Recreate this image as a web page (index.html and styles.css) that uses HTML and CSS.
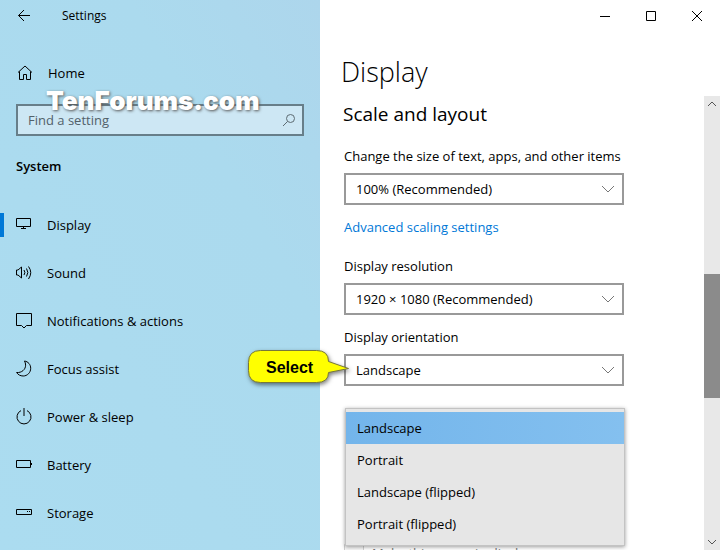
FILE: index.html
```html
<!DOCTYPE html>
<html lang="en">

<head>
    <meta charset="utf-8">
    <title>Settings</title>
    <link rel="stylesheet" href="styles.css">
</head>

<body>

    <aside class="sidebar">
        <div class="titlebar">
            <button class="back-button" title="Back">
                <svg width="14" height="14" viewBox="0 0 14 14">
                    <path d="M13 6.5H1.5M7 1L1.5 6.5L7 12" />
                </svg>
            </button>
            <span class="app-name">Settings</span>
        </div>

        <a href="#" class="nav-link home">
            <svg width="18" height="18" viewBox="0 0 18 18">
                <path d="M2 8.5L9 2L16 8.5M3.5 7.5V15.5H7.5V10.5H10.5V15.5H14.5V7.5" />
            </svg>
            Home
        </a>

        <div class="search">
            <input type="text" class="search-input" placeholder="Find a setting" aria-label="Find a setting">
            <svg width="14" height="14" viewBox="0 0 14 14">
                <circle cx="8.5" cy="5.5" r="4" />
                <path d="M5.5 8.5L1 13" />
            </svg>
            <div class="watermark">TenForums.com</div>
        </div>

        <h2 class="group-title">System</h2>

        <nav>
            <a href="#" class="nav-link active">
                <svg width="18" height="18" viewBox="0 0 18 18">
                    <path d="M1.5 2.5H15.5V10.5H1.5ZM8.5 10.5V12.5M6 12.5H11" />
                </svg>
                Display
            </a>
            <a href="#" class="nav-link">
                <svg width="18" height="18" viewBox="0 0 18 18">
                    <path d="M1.5 6V11H3L6.5 14V3L3 6Z" />
                    <path d="M9 6Q10.8 8.5 9 11M11.5 4.5Q14.2 8.5 11.5 12.5M13.5 2.5Q18 8.5 13.5 15" />
                </svg>
                Sound
            </a>
            <a href="#" class="nav-link">
                <svg width="18" height="18" viewBox="0 0 18 18">
                    <path d="M1.5 1.5H16.5V13.5H11.5L9 16L6.5 13.5H1.5Z" />
                </svg>
                Notifications &amp; actions
            </a>
            <a href="#" class="nav-link">
                <svg width="18" height="18" viewBox="0 0 18 18">
                    <path d="M9.5 1C13.2 1.6 15.7 4.6 15.7 8.3C15.7 12.6 12.3 16 8.2 16C5.3 16 2.9 14.6 1.6 12.5C6.7 13 10.6 9.5 10.6 5.2C10.6 3.6 10.2 2.2 9.5 1Z" />
                </svg>
                Focus assist
            </a>
            <a href="#" class="nav-link">
                <svg width="18" height="18" viewBox="0 0 18 18">
                    <path d="M6 2.6A7 7 0 1 0 12 2.6M9 0V8" />
                </svg>
                Power &amp; sleep
            </a>
            <a href="#" class="nav-link">
                <svg width="18" height="18" viewBox="0 0 18 18">
                    <path d="M1.5 4.5H15.5V11.5H1.5ZM16.5 7V9" />
                </svg>
                Battery
            </a>
            <a href="#" class="nav-link">
                <svg width="18" height="18" viewBox="0 0 18 18">
                    <path d="M1.5 5.5H16.5V10.5H1.5ZM12 7.5H13M14 7.5H15" />
                </svg>
                Storage
            </a>
        </nav>
    </aside>

    <main class="main">
        <div class="window-buttons">
            <button class="window-button" title="Minimize">
                <svg width="12" height="12" viewBox="0 0 12 12"><path d="M1 6.5H11" /></svg>
            </button>
            <button class="window-button" title="Maximize">
                <svg width="12" height="12" viewBox="0 0 12 12"><path d="M1.5 1.5H10.5V10.5H1.5Z" /></svg>
            </button>
            <button class="window-button" title="Close">
                <svg width="12" height="12" viewBox="0 0 12 12"><path d="M1 1L11 11M11 1L1 11" /></svg>
            </button>
        </div>

        <h1 class="page-title">Display</h1>

        <div class="scroll-area">
            <div class="content">
                <h2 class="section-title">Scale and layout</h2>

                <div class="field">
                    <label for="scale">Change the size of text, apps, and other items</label>
                    <div class="select-box">
                        <select id="scale">
                            <option>100% (Recommended)</option>
                        </select>
                        <svg width="12" height="8" viewBox="0 0 12 8"><path d="M0 1L6 7L12 1" /></svg>
                    </div>
                </div>

                <a href="#" class="text-link">Advanced scaling settings</a>

                <div class="field">
                    <label for="resolution">Display resolution</label>
                    <div class="select-box">
                        <select id="resolution">
                            <option>1920 × 1080 (Recommended)</option>
                        </select>
                        <svg width="12" height="8" viewBox="0 0 12 8"><path d="M0 1L6 7L12 1" /></svg>
                    </div>
                </div>

                <div class="field">
                    <label for="orientation">Display orientation</label>
                    <div class="select-box">
                        <select id="orientation">
                            <option>Landscape</option>
                            <option>Portrait</option>
                            <option>Landscape (flipped)</option>
                            <option>Portrait (flipped)</option>
                        </select>
                        <svg width="12" height="8" viewBox="0 0 12 8"><path d="M0 1L6 7L12 1" /></svg>

                        <!-- Opened list of the orientation box -->
                        <div class="menu" role="listbox" aria-label="Display orientation">
                            <button class="menu-item selected" role="option" aria-selected="true">Landscape</button>
                            <button class="menu-item" role="option">Portrait</button>
                            <button class="menu-item" role="option">Landscape (flipped)</button>
                            <button class="menu-item" role="option">Portrait (flipped)</button>
                        </div>

                        <div class="callout">
                            <svg width="112" height="46" viewBox="0 0 112 46">
                                <path d="M16.5 4.5H72.5Q84.5 4.5 84.5 15.5L104.5 22.5L84.5 26.5Q84.5 36.5 72.5 36.5H16.5Q4.5 36.5 4.5 24.5V16.5Q4.5 4.5 16.5 4.5Z" />
                            </svg>
                            <span>Select</span>
                        </div>
                    </div>
                </div>

                <label class="check">
                    <input type="checkbox" disabled>
                    Make this my main display
                </label>
            </div>

            <div class="scrollbar">
                <svg width="10" height="6" viewBox="0 0 10 6"><path d="M1 5L5 1L9 5" /></svg>
                <div class="track">
                    <div class="thumb"></div>
                </div>
                <svg width="10" height="6" viewBox="0 0 10 6"><path d="M1 1L5 5L9 1" /></svg>
            </div>
        </div>
    </main>

</body>

</html>
```
FILE: styles.css
```css
* {
    box-sizing: border-box;
}

body {
    display: flex;
    height: 100vh;
    margin: 0;
    overflow: hidden;
    background-color: #fff;
    color: #000;
    font-family: "Open Sans", "Noto Sans", sans-serif;
    font-size: 13px;
    line-height: 20px;
}

svg {
    flex: none;
    fill: none;
    stroke: #000;
}

button,
input,
select {
    font: inherit;
    color: inherit;
}

button {
    padding: 0;
    border: none;
    background: none;
}

h1,
h2 {
    margin: 0;
}

/* Left pane */
.sidebar {
    flex: 0 0 320px;
    overflow: hidden;
    background: linear-gradient(to bottom left, #add6ec, #abdaee 30%, #abdcf0);
}

.titlebar {
    display: flex;
    align-items: center;
    height: 32px;
}

.back-button {
    display: flex;
    justify-content: center;
    width: 48px;
}

.app-name {
    margin-left: 14px;
    font-size: 12px;
}

.nav-link {
    display: flex;
    align-items: center;
    gap: 14px;
    height: 48px;
    padding-left: 15px;
    color: #000;
    text-decoration: none;
}

.home {
    margin-top: 17px;
    padding-left: 16px;
}

.active {
    background: linear-gradient(#0078d7, #0078d7) left center / 4px 24px no-repeat;
}

.search {
    position: relative;
    display: flex;
    align-items: center;
    height: 32px;
    margin: 7px 16px 0;
    padding: 0 6px 0 10px;
    border: 2px solid #677e89;
    background-color: #cde7f4;
}

.search svg {
    stroke: #5d6b72;
}

.search-input {
    flex: 1;
    min-width: 0;
    padding: 0;
    border: none;
    outline: none;
    background: none;
}

.search-input::placeholder {
    color: #52616a;
    opacity: 1;
}

.watermark {
    position: absolute;
    left: 28px;
    top: -21px;
    color: #fff;
    font-family: Inter, sans-serif;
    font-size: 26px;
    font-weight: 900;
    line-height: 32px;
    text-shadow: 1px 1px 3px #555;
}

.group-title {
    margin: 20px 16px 25px;
    font-size: 13px;
    font-weight: 600;
}

/* Right pane */
.main {
    flex: 1;
    display: flex;
    flex-direction: column;
    min-width: 0;
}

.window-buttons {
    display: flex;
    justify-content: flex-end;
    height: 32px;
}

.window-button {
    display: flex;
    align-items: center;
    justify-content: center;
    width: 46px;
}

.page-title {
    padding: 20px 21px 4px;
    font-size: 27px;
    font-weight: 300;
    line-height: 40px;
}

.scroll-area {
    flex: 1;
    display: flex;
    min-height: 0;
}

.content {
    flex: 1;
    padding: 4px 24px 0;
}

.section-title {
    margin: 0 0 18px -1px;
    font-size: 19px;
    font-weight: 400;
    line-height: 28px;
}

.field {
    margin-bottom: 12px;
}

.field label {
    display: block;
    margin-bottom: 7px;
}

.select-box {
    position: relative;
    display: flex;
    align-items: center;
    max-width: 280px;
}

.select-box select {
    width: 100%;
    height: 32px;
    padding: 0 32px 0 10px;
    border: 2px solid #999;
    border-radius: 0;
    appearance: none;
    background-color: #fff;
}

/* Arrow over the select */
.select-box > svg {
    position: absolute;
    right: 10px;
    stroke: #777;
    pointer-events: none;
}

.text-link {
    display: block;
    margin-bottom: 19px;
    color: #0078d7;
    text-decoration: none;
}

.menu {
    position: absolute;
    top: 54px;
    left: 1px;
    right: -1px;
    z-index: 1;
    padding: 3px 0 5px;
    border: 1px solid #c3c3c3;
    background-color: #e6e6e6;
    box-shadow: 0 1px 4px rgba(0, 0, 0, 0.4);
}

.menu-item {
    display: block;
    width: 100%;
    height: 32px;
    padding-left: 11px;
    text-align: left;
}

.selected {
    background: linear-gradient(to right, #73b5eb, #84c0ef);
}

.callout {
    position: absolute;
    top: -8px;
    left: -100px;
    z-index: 2;
    display: flex;
}

.callout svg {
    fill: #ff0;
    stroke: #77773a;
    filter: drop-shadow(1px 2px 2px rgba(0, 0, 0, 0.5));
}

.callout span {
    position: absolute;
    top: 12px;
    left: 22px;
    font-family: "Liberation Sans", Arial, sans-serif;
    font-size: 16px;
    font-weight: bold;
}

.check {
    display: flex;
    align-items: center;
    gap: 8px;
    margin-top: 157px;
    color: #777;
    white-space: nowrap;
}

.check input {
    width: 20px;
    height: 20px;
    margin: 0;
}

.scrollbar {
    flex: 0 0 16px;
    display: flex;
    flex-direction: column;
    align-items: center;
    gap: 5px;
    padding: 5px 0;
    background-color: #e8e8e8;
}

.scrollbar svg {
    stroke: #555;
}

.track {
    flex: 1;
    width: 100%;
    padding-top: 162px;
}

.thumb {
    height: 124px;
    background-color: #8b8b8b;
}
```
